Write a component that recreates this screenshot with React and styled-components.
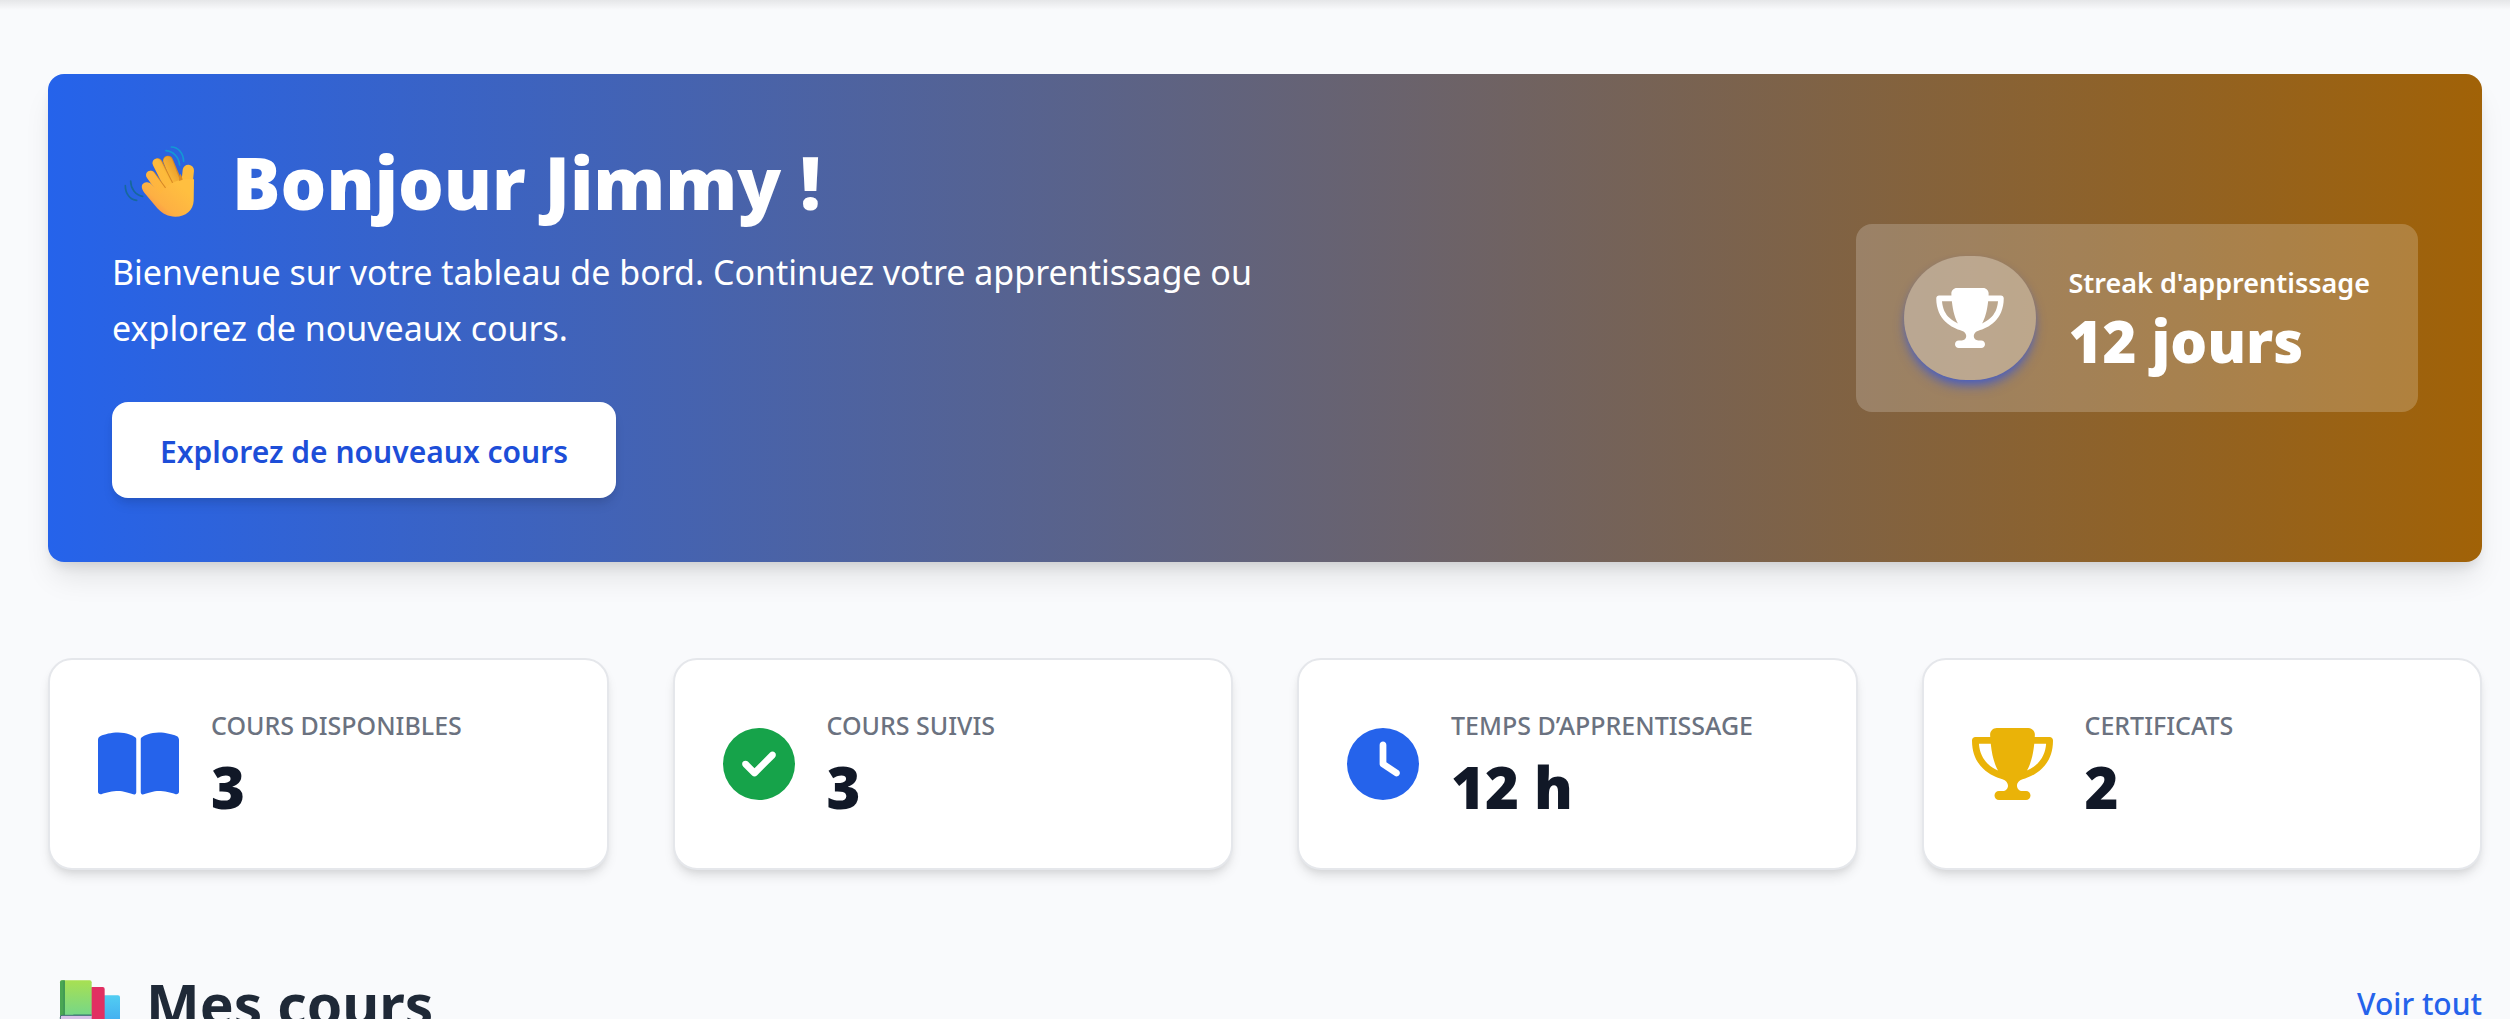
import React from "react";
import styled, { createGlobalStyle } from "styled-components";
import { FaBookOpen, FaCircleCheck, FaClock, FaTrophy } from "react-icons/fa6";

const GlobalStyle = createGlobalStyle`
  *, *::before, *::after { box-sizing: border-box; }
  body {
    margin: 0;
    background: #f9fafc;
    color: #111827;
    font-family: "Noto Sans", "Open Sans", sans-serif;
  }
  h1, h2, p, dl, dt, dd { margin: 0; }
`;

const Page = styled.div`
  height: 100vh;
  overflow: hidden;
`;

const HeaderShadow = styled.div`
  height: 10px;
  background: linear-gradient(rgba(0, 0, 0, 0.08), rgba(0, 0, 0, 0));
`;

const Main = styled.main`
  display: flex;
  flex-direction: column;
  gap: 96px;
  padding: 64px 28px 64px 48px;
`;

const Hero = styled.section`
  display: flex;
  align-items: center;
  justify-content: space-between;
  padding: 64px;
  border-radius: 16px;
  color: #fff;
  background: linear-gradient(to right, #2563eb, #a16207);
  box-shadow: 0 20px 30px -6px rgba(0, 0, 0, 0.1), 0 8px 12px -4px rgba(0, 0, 0, 0.1);
`;

const Intro = styled.div`
  max-width: 1152px;
`;

const Title = styled.h1`
  display: flex;
  align-items: center;
  gap: 30px;
  font-size: 72px;
  line-height: 88px;
  font-weight: 900;
`;

const WaveArt = styled.svg`
  width: 90px;
  height: 84px;
`;

const Lead = styled.p`
  margin-top: 18px;
  font-size: 34px;
  line-height: 56px;
`;

const ExploreButton = styled.button`
  margin-top: 46px;
  height: 96px;
  padding: 2px 48px 0;
  border: 0;
  border-radius: 16px;
  background: #fff;
  color: #1d4ed8;
  font-family: inherit;
  font-size: 30px;
  font-weight: 600;
  cursor: pointer;
  box-shadow: 0 8px 12px -2px rgba(0, 0, 0, 0.1), 0 4px 8px -4px rgba(0, 0, 0, 0.1);
`;

const Streak = styled.div`
  display: flex;
  align-items: center;
  gap: 32px;
  padding: 32px 48px;
  border-radius: 16px;
  background: rgba(255, 255, 255, 0.2);
`;

const StreakBadge = styled.span`
  display: flex;
  padding: 32px;
  border-radius: 9999px;
  font-size: 60px;
  background: rgba(255, 255, 255, 0.3);
  box-shadow: 0 8px 12px -2px rgba(37, 80, 235, 0.55), 0 4px 8px -4px rgba(37, 80, 235, 0.55);
`;

const TrophyIcon = styled(FaTrophy)`
  width: 68px;
`;

const StreakLabel = styled.p`
  font-size: 27px;
  line-height: 42px;
  font-weight: 600;
`;

const StreakValue = styled.p`
  margin-top: 4px;
  font-size: 58px;
  line-height: 66px;
  font-weight: 900;
`;

const Stats = styled.section`
  display: grid;
  grid-template-columns: repeat(4, 1fr);
  gap: 64px;
`;

const StatCard = styled.article`
  display: flex;
  align-items: center;
  gap: 32px;
  padding: 48px;
  border: 2px solid #e5e7eb;
  border-radius: 24px;
  background: #fff;
  box-shadow: 0 8px 12px -2px rgba(0, 0, 0, 0.1), 0 4px 8px -4px rgba(0, 0, 0, 0.1);
`;

const StatIcon = styled.span`
  display: flex;
  font-size: 72px;
  color: ${(p) => p.$color};

  svg {
    width: ${(p) => (p.$wide ? "81px" : "72px")};
  }
`;

const StatLabel = styled.dt`
  font-size: 25px;
  line-height: 34px;
  font-weight: 500;
  text-transform: uppercase;
  color: #6b7280;
`;

const StatValue = styled.dd`
  margin-top: 12px;
  font-size: 58px;
  line-height: 66px;
  font-weight: 900;
`;

const SectionHead = styled.div`
  display: flex;
  align-items: center;
  justify-content: space-between;
`;

const SectionTitle = styled.h2`
  display: flex;
  align-items: center;
  gap: 14px;
  font-size: 57px;
  line-height: 76px;
  font-weight: 700;
  color: #1f2937;
`;

const BooksArt = styled.svg`
  width: 84px;
  height: 76px;
`;

const MoreLink = styled.a`
  font-size: 30px;
  line-height: 48px;
  font-weight: 500;
  color: #2563eb;
  text-decoration: none;
`;

function WavingHand() {
  return (
    <WaveArt viewBox="36 63 270 252" role="img" aria-label="Main qui salue">
      <defs>
        <linearGradient id="skin" gradientUnits="userSpaceOnUse" x1="150" y1="280" x2="230" y2="190">
          <stop offset="0" stopColor="#f98a4c" />
          <stop offset="0.35" stopColor="#fdb043" />
          <stop offset="1" stopColor="#ffbf40" />
        </linearGradient>
        <linearGradient id="finger" gradientUnits="userSpaceOnUse" x1="150" y1="200" x2="230" y2="150">
          <stop offset="0" stopColor="#ffb341" />
          <stop offset="0.6" stopColor="#fdbb3b" />
          <stop offset="1" stopColor="#e9a02c" />
        </linearGradient>
      </defs>
      <g fill="none" strokeLinecap="round">
        <path d="M214 84c20 0 36 18 37 43M198 95c22 2 38 18 41 43" stroke="#1498d4" strokeWidth="5" />
        <path d="M92 186c0 22 14 42 36 46M76 200c0 24 14 42 34 44" stroke="#17689c" strokeWidth="5" />
        <path d="M204 125l32 76" stroke="#d98a24" strokeWidth="30" />
        <path d="M203 125l31 80" stroke="url(#finger)" strokeWidth="26" />
        <path d="M173 133l42 82" stroke="#d98a24" strokeWidth="30" />
        <path d="M171 132l42 84" stroke="url(#finger)" strokeWidth="27" />
        <path d="M153 169l45 60" stroke="#d98a24" strokeWidth="28" />
        <path d="M151 168l45 63" stroke="url(#finger)" strokeWidth="26" />
        <path d="M265 154l-7 70" stroke="#fdbb3b" strokeWidth="34" />
      </g>
      <path
        d="M139 190c10-2 18 8 26 17l17 18c12-20 36-38 66-44h34l-1 64c-1 28-24 48-55 48-22 0-37-8-54-25l-39-47c-10-13-12-28 6-31z"
        fill="url(#skin)"
      />
      <path d="M248 182c-2-8-3-14-8-18l-3 22z" fill="#d98a24" />
    </WaveArt>
  );
}

function Books() {
  return (
    <BooksArt viewBox="54 48 252 228" role="img" aria-label="Livres">
      <defs>
        <linearGradient id="cover" x1="0" y1="0" x2="0" y2="1">
          <stop offset="0" stopColor="#a8e052" />
          <stop offset="1" stopColor="#72d68c" />
        </linearGradient>
        <linearGradient id="sky" x1="0" y1="0" x2="0" y2="1">
          <stop offset="0" stopColor="#52cdf2" />
          <stop offset="1" stopColor="#399cf0" />
        </linearGradient>
      </defs>
      <rect x="218" y="136" width="52" height="124" rx="6" fill="url(#sky)" />
      <rect x="180" y="111" width="44" height="149" rx="6" fill="#e12f62" />
      <rect x="90" y="91" width="95" height="112" rx="6" fill="url(#cover)" />
      <path d="M96 91h8v108H90V97q0-6 6-6z" fill="#4aa653" />
      <rect x="101" y="92" width="3" height="104" fill="#338a55" />
      <path d="M130 193h54v4h-54z" fill="#4b9f79" />
      <path d="M91 200q0-4 5-4h89v64H91z" fill="#d6c2e8" />
      <path d="M91 207v-6q0-5 5-5h89" fill="none" stroke="#3b6f72" strokeWidth="3" />
    </BooksArt>
  );
}

const stats = [
  { label: "Cours disponibles", value: "3", color: "#2563eb", Icon: FaBookOpen, wide: true },
  { label: "Cours suivis", value: "3", color: "#16a34a", Icon: FaCircleCheck },
  { label: "Temps d’apprentissage", value: "12 h", color: "#2563eb", Icon: FaClock },
  { label: "Certificats", value: "2", color: "#eab308", Icon: FaTrophy, wide: true },
];

export default function App() {
  return (
    <Page>
      <GlobalStyle />
      <HeaderShadow />
      <Main>
        <Hero>
          <Intro>
            <Title>
              <WavingHand />
              Bonjour Jimmy !
            </Title>
            <Lead>
              Bienvenue sur votre tableau de bord. Continuez votre apprentissage ou explorez de nouveaux cours.
            </Lead>
            <ExploreButton type="button">Explorez de nouveaux cours</ExploreButton>
          </Intro>
          <Streak>
            <StreakBadge>
              <TrophyIcon />
            </StreakBadge>
            <div>
              <StreakLabel>Streak d'apprentissage</StreakLabel>
              <StreakValue>12 jours</StreakValue>
            </div>
          </Streak>
        </Hero>
        <Stats>
          {stats.map(({ label, value, color, Icon, wide }) => (
            <StatCard key={label}>
              <StatIcon $color={color} $wide={wide}>
                <Icon />
              </StatIcon>
              <dl>
                <StatLabel>{label}</StatLabel>
                <StatValue>{value}</StatValue>
              </dl>
            </StatCard>
          ))}
        </Stats>
        <SectionHead>
          <SectionTitle>
            <Books />
            Mes cours
          </SectionTitle>
          <MoreLink href="#cours">Voir tout</MoreLink>
        </SectionHead>
      </Main>
    </Page>
  );
}
